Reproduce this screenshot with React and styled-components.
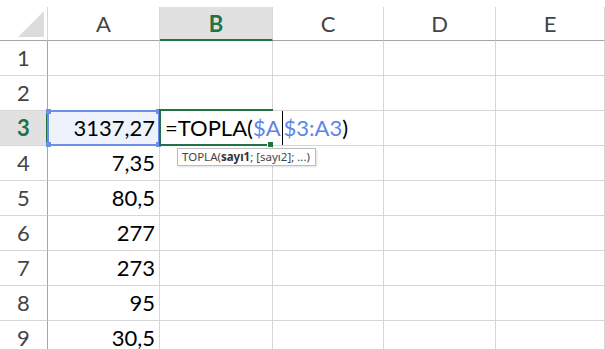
import React from 'react';
import styled, { createGlobalStyle } from 'styled-components';

const GlobalStyle = createGlobalStyle`
  html, body {
    margin: 0;
    padding: 0;
    background: #ffffff;
  }
  #root {
    width: 605px;
    height: 349px;
    overflow: hidden;
  }
`;

const GREEN = '#217346';
const BLUE = '#6a8fe6';
const GRID = '#d6d6d6';
const HEAD_LINE = '#a6a6a6';

const Sheet = styled.div`
  display: grid;
  grid-template-columns: 48px 112px 113px 111px 112px 1fr;
  grid-auto-rows: 35px;
  grid-template-rows: 34px;
  margin-top: 7px;
  font-family: 'Lato', 'Open Sans', sans-serif;
  font-size: 22px;
  color: #000;
`;

const Corner = styled.div`
  position: relative;
  border-right: 1px solid ${GRID};
  border-bottom: 1px solid ${HEAD_LINE};
  box-sizing: border-box;
  svg {
    position: absolute;
    right: 3px;
    bottom: 3px;
  }
`;

const ColHead = styled.div`
  display: flex;
  align-items: center;
  justify-content: center;
  box-sizing: border-box;
  border-right: 1px solid ${GRID};
  border-bottom: ${p => (p.$active ? `2px solid ${GREEN}` : `1px solid ${HEAD_LINE}`)};
  background: ${p => (p.$active ? '#e1e1e1' : '#fff')};
  color: ${p => (p.$active ? GREEN : '#444')};
  font-weight: ${p => (p.$active ? 700 : 400)};
  padding-top: ${p => (p.$active ? '1px' : '0')};
`;

const RowHead = styled.div`
  display: flex;
  align-items: center;
  justify-content: center;
  box-sizing: border-box;
  border-right: ${p => (p.$active ? `2px solid ${GREEN}` : `1px solid ${HEAD_LINE}`)};
  border-bottom: 1px solid ${GRID};
  background: ${p => (p.$active ? '#e1e1e1' : '#fff')};
  color: ${p => (p.$active ? GREEN : '#444')};
  font-weight: ${p => (p.$active ? 700 : 400)};
  padding-left: ${p => (p.$active ? '1px' : '0')};
  padding-bottom: 1px;
`;

const Cell = styled.div`
  position: relative;
  display: flex;
  align-items: center;
  justify-content: flex-end;
  box-sizing: border-box;
  padding-right: 4px;
  padding-bottom: 1px;
  border-right: 1px solid ${GRID};
  border-bottom: 1px solid ${GRID};
  background: ${p => (p.$selected ? '#edf2fc' : '#fff')};
  z-index: ${p => (p.$raised ? 2 : 'auto')};
`;

const RangeBox = styled.div`
  position: absolute;
  left: -1px;
  top: -1px;
  right: -1px;
  bottom: -1px;
  border: 2px solid ${BLUE};
  pointer-events: none;
`;

const Handle = styled.span`
  position: absolute;
  width: 5px;
  height: 5px;
  background: ${BLUE};
  ${p => (p.$top ? 'top: -3px;' : 'bottom: -3px;')}
  ${p => (p.$left ? 'left: -3px;' : 'right: -3px;')}
`;

const EditBox = styled.div`
  position: absolute;
  left: -1px;
  top: -2px;
  width: 114px;
  height: 37px;
  box-sizing: border-box;
  border: 2px solid ${GREEN};
  border-right: none;
  z-index: 2;
`;

const FillHandle = styled.span`
  position: absolute;
  right: 0;
  bottom: -3px;
  width: 5px;
  height: 5px;
  background: ${GREEN};
  border-left: 1px solid #fff;
`;

const Editor = styled.div`
  position: absolute;
  left: 0;
  top: 0;
  width: 205px;
  height: 34px;
  background: #fff;
  display: flex;
  align-items: center;
  padding-left: 5px;
  padding-bottom: 1px;
  box-sizing: border-box;
  white-space: nowrap;
  z-index: 1;
`;

const Ref = styled.span`
  color: #5b86e5;
`;

const Caret = styled.span`
  display: inline-block;
  width: 1px;
  height: 34px;
  background: #000;
  margin: 0 1px;
  vertical-align: middle;
`;

const Tip = styled.div`
  position: absolute;
  left: 17px;
  top: 37px;
  padding: 1px 5px 2px 4px;
  border: 1px solid #bdbdbd;
  background: #fff;
  box-shadow: 1px 1px 2px rgba(0, 0, 0, 0.12);
  font-family: 'Noto Sans', 'Open Sans', sans-serif;
  font-size: 11.5px;
  line-height: 13px;
  color: #444;
  white-space: nowrap;
  z-index: 3;
  b {
    font-weight: 700;
    color: #333;
  }
`;

const cols = ['A', 'B', 'C', 'D', 'E'];
const values = ['', '', '3137,27', '7,35', '80,5', '277', '273', '95', '30,5'];

export default function App() {
  return (
    <>
      <GlobalStyle />
      <Sheet>
        <Corner>
          <svg width="26" height="26" viewBox="0 0 26 26">
            <polygon points="26,0 26,26 0,26" fill="#dcdcdc" />
          </svg>
        </Corner>
        {cols.map(c => (
          <ColHead key={c} $active={c === 'B'}>
            {c}
          </ColHead>
        ))}
        {values.map((v, i) => {
          const row = i + 1;
          const active = row === 3;
          return (
            <React.Fragment key={row}>
              <RowHead $active={active}>{row}</RowHead>
              <Cell $selected={active} $raised={active}>
                {v}
                {active && (
                  <RangeBox>
                    <Handle $top $left />
                    <Handle $top />
                    <Handle $left />
                    <Handle />
                  </RangeBox>
                )}
              </Cell>
              <Cell $raised={active}>
                {active && (
                  <>
                    <Editor>
                      =TOPLA(<Ref>$A</Ref>
                      <Caret />
                      <Ref>$3:A3</Ref>)
                    </Editor>
                    <EditBox>
                      <FillHandle />
                    </EditBox>
                    <Tip>
                      TOPLA(<b>sayı1</b>; [sayı2]; ...)
                    </Tip>
                  </>
                )}
              </Cell>
              <Cell />
              <Cell />
              <Cell />
            </React.Fragment>
          );
        })}
      </Sheet>
    </>
  );
}
